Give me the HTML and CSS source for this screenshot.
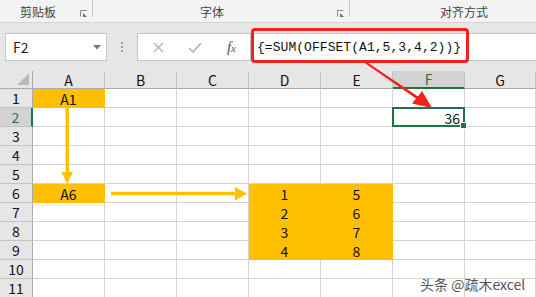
FILE: index.html
```html
<!DOCTYPE html>
<html>
<head>
<meta charset="utf-8">
<link rel="stylesheet" href="styles.css">
</head>
<body>
<div class="page">
  <div class="ribbon">
    <div class="group g1"><span class="glabel">剪贴板</span><svg class="launch" width="8" height="7" viewBox="0 0 8 7"><path d="M0.5 6.5V0.5H6.5" fill="none" stroke="#8a8a8a" stroke-width="1"/><path d="M3 3L7 7H3Z" fill="#6e6e6e"/></svg></div>
    <div class="group g2"><span class="glabel">字体</span><svg class="launch" width="8" height="7" viewBox="0 0 8 7"><path d="M0.5 6.5V0.5H6.5" fill="none" stroke="#8a8a8a" stroke-width="1"/><path d="M3 3L7 7H3Z" fill="#6e6e6e"/></svg></div>
    <div class="group g3"><span class="glabel">对齐方式</span></div>
  </div>
  <div class="fbar">
    <div class="namebox"><span>F2</span><svg width="8" height="5" viewBox="0 0 8 5"><path d="M0 0H8L4 4.5Z" fill="#777"/></svg></div>
    <div class="dots"><i></i><i></i><i></i></div>
    <div class="fbtns">
      <svg width="11" height="11" viewBox="0 0 11 11"><path d="M1 1L10 10M10 1L1 10" stroke="#b4b4b4" stroke-width="1.4"/></svg>
      <svg width="14" height="11" viewBox="0 0 14 11"><path d="M1 6L5 10L13 1" fill="none" stroke="#b4b4b4" stroke-width="1.6"/></svg>
      <span class="fx">f<span class="x">x</span></span>
    </div>
    <div class="formula"><span class="ftext">{=SUM(OFFSET(A1,5,3,4,2))}</span></div>
    <div class="redbox"></div>
  </div>
  <div class="sheet">
    <div class="hd corner"><svg width="12" height="12" viewBox="0 0 12 12"><path d="M12 0V12H0Z" fill="#b9b9b9"/></svg></div>
    <div class="hd">A</div><div class="hd">B</div><div class="hd">C</div><div class="hd">D</div><div class="hd">E</div><div class="hd hsel">F</div><div class="hd">G</div>

    <div class="rh">1</div><div class="c y">A1</div><div class="c"></div><div class="c"></div><div class="c"></div><div class="c"></div><div class="c"></div><div class="c"></div>
    <div class="rh rsel">2</div><div class="c"></div><div class="c"></div><div class="c"></div><div class="c"></div><div class="c"></div><div class="c sel num">36</div><div class="c"></div>
    <div class="rh">3</div><div class="c"></div><div class="c"></div><div class="c"></div><div class="c"></div><div class="c"></div><div class="c"></div><div class="c"></div>
    <div class="rh">4</div><div class="c"></div><div class="c"></div><div class="c"></div><div class="c"></div><div class="c"></div><div class="c"></div><div class="c"></div>
    <div class="rh">5</div><div class="c"></div><div class="c"></div><div class="c"></div><div class="c"></div><div class="c"></div><div class="c"></div><div class="c"></div>
    <div class="rh">6</div><div class="c y">A6</div><div class="c"></div><div class="c"></div><div class="c y">1</div><div class="c y">5</div><div class="c"></div><div class="c"></div>
    <div class="rh">7</div><div class="c"></div><div class="c"></div><div class="c"></div><div class="c y">2</div><div class="c y">6</div><div class="c"></div><div class="c"></div>
    <div class="rh">8</div><div class="c"></div><div class="c"></div><div class="c"></div><div class="c y">3</div><div class="c y">7</div><div class="c"></div><div class="c"></div>
    <div class="rh">9</div><div class="c"></div><div class="c"></div><div class="c"></div><div class="c y">4</div><div class="c y">8</div><div class="c"></div><div class="c"></div>
    <div class="rh">10</div><div class="c"></div><div class="c"></div><div class="c"></div><div class="c"></div><div class="c"></div><div class="c"></div><div class="c"></div>
    <div class="rh">11</div><div class="c"></div><div class="c"></div><div class="c"></div><div class="c"></div><div class="c"></div><div class="c"></div><div class="c"></div>
  </div>
  <svg class="arrows" width="536" height="297" viewBox="0 0 536 297">
    <rect x="65.5" y="108" width="3.5" height="66" fill="#ffc000"/>
    <path d="M61.5 172H73L67.2 184Z" fill="#ffc000"/>
    <rect x="111" y="191.8" width="126" height="3.5" fill="#ffc000"/>
    <path d="M235 187V200.5L247 193.5Z" fill="#ffc000"/>
    <path d="M364 62.5L366 61.5L418 96.5L422 91L432 108L412 103.5L416 98.5Z" fill="#f5201c"/>
  </svg>
  <div class="wm">头条 @疏木excel</div>
</div>
</body>
</html>
```
FILE: styles.css
```css
* { box-sizing: border-box; }
html, body { margin: 0; padding: 0; }
body { width: 536px; height: 297px; overflow: hidden; background: #fff; }
.page { position: relative; width: 536px; height: 297px; overflow: hidden; font-family: "Noto Sans CJK SC", "Liberation Sans", sans-serif; }

.ribbon { display: flex; height: 23px; background: #f3f3f3; border-bottom: 1px solid #d6d6d6; }
.group { position: relative; display: flex; align-items: center; height: 22px; font-size: 12px; color: #444; }
.group::after { content: ""; position: absolute; right: 0; top: 0; height: 17px; border-right: 1px solid #c8c8c8; }
.g1 { width: 93px; padding-left: 20px; }
.g2 { width: 257px; padding-left: 107px; }
.g3 { flex: 1; padding-left: 90px; }
.g3::after { display: none; }
.glabel { line-height: 12px; padding-top: 1px; }
.launch { position: absolute; right: 5px; top: 10px; }
.g1 .launch { right: 5px; }

.fbar { position: relative; display: flex; align-items: flex-start; height: 48px; background: #e6e6e6; padding: 10px 0 0 5px; }
.namebox { width: 102px; height: 28px; background: #fff; border: 1px solid #c6c6c6; display: flex; align-items: center; justify-content: space-between; padding: 0 5px 0 7px; font-size: 14px; color: #222; }
.dots { width: 30px; height: 28px; display: flex; flex-direction: column; align-items: center; justify-content: center; gap: 2px; }
.dots i { display: block; width: 2px; height: 2px; background: #a0a0a0; }
.fbtns { width: 114px; height: 28px; background: #fff; border: 1px solid #c6c6c6; display: flex; align-items: center; padding: 0 14px 0 15px; justify-content: space-between; }
.fx { font-family: "Liberation Serif", serif; font-style: italic; font-size: 15px; color: #555; line-height: 1; }
.fx .x { font-size: 11px; }
.formula { flex: 1; height: 28px; background: #fff; border-top: 1px solid #c6c6c6; border-bottom: 1px solid #c6c6c6; display: flex; align-items: center; padding-left: 6px; }
.ftext { font-family: "Liberation Mono", monospace; font-size: 13px; color: #111; letter-spacing: 0.05px; }
.redbox { position: absolute; left: 251px; top: 5px; width: 218px; height: 35px; border: 3px solid #f5201c; border-radius: 4px; }

.sheet { display: grid; grid-template-columns: 33px repeat(6, 72px) 1fr; grid-template-rows: 18px; grid-auto-rows: 19px; font-size: 14px; color: #111; }
.hd { background: #e6e6e6; border-right: 1px solid #c3c3c3; border-bottom: 1px solid #ababab; display: flex; align-items: center; justify-content: center; font-size: 14px; color: #111; }
.corner { justify-content: flex-end; align-items: flex-end; padding: 0 3px 3px 0; border-right-color: #ababab; }
.hsel { background: #d3d3d3; color: #217346; border-bottom: 2px solid #217346; }
.rh { background: #e6e6e6; border-right: 1px solid #ababab; border-bottom: 1px solid #c3c3c3; display: flex; align-items: center; justify-content: center; }
.rsel { background: #d3d3d3; color: #217346; border-right: 2px solid #217346; }
.c { border-right: 1px solid #d4d4d4; border-bottom: 1px solid #d4d4d4; display: flex; align-items: center; justify-content: center; line-height: 1; padding-top: 2px; }
.y { background: #ffc000; border-color: #ffc000; }
.num { justify-content: flex-end; padding-right: 4px; }
.sel { position: relative; }
.sel::after { content: ""; position: absolute; left: -1px; top: -1px; right: -1px; bottom: -1px; border: 2px solid #217346; }
.sel::before { content: ""; position: absolute; right: -3px; bottom: -3px; width: 5px; height: 5px; background: #217346; border: 1px solid #fff; z-index: 1; }

.arrows { position: absolute; left: 0; top: 0; pointer-events: none; }
.wm { position: absolute; left: 420px; top: 274px; font-size: 14px; color: #555; text-shadow: 0 0 2px #fff, 0 0 1px #fff; letter-spacing: 0; }
```
